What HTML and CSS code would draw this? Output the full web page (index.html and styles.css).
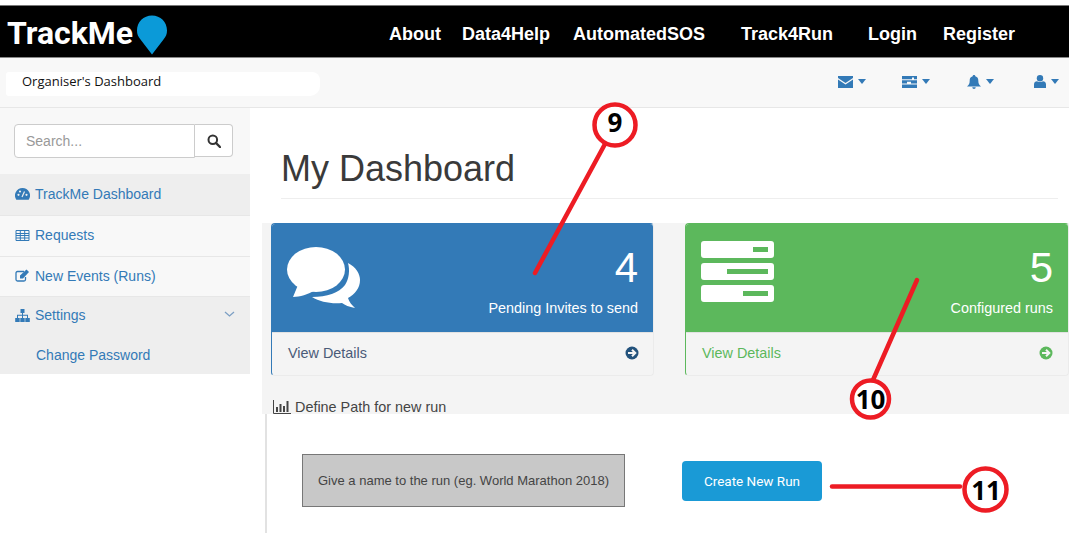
FILE: index.html
```html
<!DOCTYPE html>
<html lang="en">
<head>
    <meta charset="UTF-8">
    <meta name="viewport" content="width=device-width, initial-scale=1.0">
    <title>TrackMe - Organiser's Dashboard</title>
    <link rel="stylesheet" href="styles.css">
</head>
<body>
    <div class="topbar">
        <div class="brand">
            <span class="brand-name">TrackMe</span>
            <svg class="brand-pin" width="32" height="40" viewBox="0 0 32 40"><path d="M16 39.5 L4.5 24.5 C2 21.5 1 19 1 15.5 C1 7 7.5 .5 16 .5 C24.500 .5 31 7 31 15.500 C31 19 30 21.5 27.5 24.500 Z" fill="#0b9ad8"/></svg>
        </div>
        <nav class="mainnav">
            <a>About</a>
            <a>Data4Help</a>
            <a class="far">AutomatedSOS</a>
            <a class="far">Track4Run</a>
            <a class="near">Login</a>
            <a class="last">Register</a>
        </nav>
    </div>

    <div class="subbar">
        <div class="smudge">Organiser's Dashboard</div>
        <div class="subicons">
            <span class="subicon first">
                <svg width="15" height="12" viewBox="0 0 15 12"><path d="M0 0H15V2L7.500 7 0 2Z M0 3.500L7.500 8.500 15 3.500V12H0Z" fill="#337ab7"/></svg>
                <i class="caret"></i>
            </span>
            <span class="subicon">
                <svg width="15" height="12" viewBox="0 0 15 12"><path d="M0 0H15V3.300H12V1.500H10V3.300H0Z M0 4.300H15V7.600H9V5.800H5V7.600H0Z M0 8.600H15V12H0Z" fill="#337ab7"/></svg>
                <i class="caret"></i>
            </span>
            <span class="subicon bell">
                <svg width="14" height="14" viewBox="0 0 14 14"><path d="M7 0C8 0 8.300 .7 8.300 1.200 10.500 1.800 11.300 3.500 11.300 5.500 11.300 8.500 12 10 14 11.500H0C2 10 2.700 8.500 2.700 5.500 2.700 3.500 3.500 1.800 5.700 1.200 5.700 .7 6 0 7 0Z M5.300 12.300H8.700C8.700 13.300 8 14 7 14S5.300 13.300 5.300 12.300Z" fill="#337ab7"/></svg>
                <i class="caret"></i>
            </span>
            <span class="subicon">
                <svg width="12" height="13" viewBox="0 0 12 13"><circle cx="6" cy="3.300" r="3.200" fill="#337ab7"/><path d="M0 13V9.500C0 7.500 1.500 6.300 3 6.300 4 7.200 8 7.200 9 6.300 10.500 6.300 12 7.500 12 9.500V13Z" fill="#337ab7"/></svg>
                <i class="caret"></i>
            </span>
        </div>
    </div>

    <div class="layout">
        <aside class="sidebar">
            <div class="search">
                <div class="search-input">Search...</div>
                <div class="search-btn">
                    <svg width="14" height="14" viewBox="0 0 14 14"><circle cx="5.800" cy="5.800" r="4.300" fill="none" stroke="#333" stroke-width="2"/><path d="M9 9L13 13" stroke="#333" stroke-width="2.400" stroke-linecap="round"/></svg>
                </div>
            </div>
            <a class="side-item shaded">
                <svg class="side-icon" width="15" height="12" viewBox="0 0 15 12"><path d="M7.500 0A7.500 7.500 0 0 0 1.300 11.700H13.700A7.500 7.500 0 0 0 7.500 0Z" fill="#337ab7"/><circle cx="3.500" cy="6.800" r="1.100" fill="#eee"/><circle cx="5" cy="3.500" r="1.100" fill="#eee"/><circle cx="11.500" cy="6.800" r="1.100" fill="#eee"/><path d="M7 9L9.500 3.500" stroke="#eee" stroke-width="1.200"/></svg>
                TrackMe Dashboard
            </a>
            <a class="side-item">
                <svg class="side-icon" width="14" height="11" viewBox="0 0 14 11"><path d="M.5 .5H13.500V10.500H.5Z M.5 3.500H13.500 M.5 5.500H13.500 M.5 8H13.500 M4.800 .5V10.500 M9.200 .5V10.500" fill="none" stroke="#337ab7"/></svg>
                Requests
            </a>
            <a class="side-item short">
                <svg class="side-icon" width="15" height="13" viewBox="0 0 15 13"><path d="M9 2.500H2.500A1.500 1.500 0 0 0 1 4V10.500A1.500 1.500 0 0 0 2.500 12H9A1.500 1.500 0 0 0 10.500 10.500V8" fill="none" stroke="#337ab7" stroke-width="1.300"/><path d="M5 6.500L11.500 .5 14 3 8 9.500H5Z" fill="#337ab7"/></svg>
                New Events (Runs)
            </a>
            <div class="side-group">
                <a class="side-item plain">
                    <svg class="side-icon" width="15" height="13" viewBox="0 0 15 13"><path d="M5.500 0H9.500V4H8V5.700H13V9H14.800V13H10.300V9H12V6.700H8V9H9.700V13H5.300V9H7V6.700H3V9H4.700V13H.2V9H2V5.700H7V4H5.500Z" fill="#337ab7"/></svg>
                    Settings
                    <svg class="side-chevron" width="11" height="6" viewBox="0 0 11 6"><path d="M1 1L5.500 5 10 1" fill="none" stroke="#7c9fc4" stroke-width="1.300"/></svg>
                </a>
                <a class="side-item plain sub">Change Password</a>
            </div>
        </aside>

        <main class="content">
            <div class="page-head">
                <h1>My Dashboard</h1>
            </div>
            <section class="band">
                <div class="panels">
                    <div class="panel blue">
                        <div class="panel-top">
                            <svg class="panel-icon" width="73" height="62" viewBox="0 0 73 62"><ellipse cx="29" cy="22.500" rx="29" ry="22.500" fill="#fff"/><path d="M11 38L6 50C13 50 21 47 27 44Z" fill="#fff"/><path d="M61 16C69 20 73 27 73 33C73 41 68 47 61 51C62 55 65 58 68 61C62 60 58 58 55 56C44 57 33 55 25 50C40 50 52 46 58 38C62 32 63 23 61 16Z" fill="#fff"/></svg>
                            <div class="panel-stat">
                                <div class="stat-num">4</div>
                                <div class="stat-label">Pending Invites to send</div>
                            </div>
                        </div>
                        <div class="panel-foot">
                            <span>View Details</span>
                            <svg width="14" height="14" viewBox="0 0 14 14"><circle cx="7" cy="7" r="6.500" fill="#23527c"/><path d="M3 7H10M7 3.800L10.300 7 7 10.200" fill="none" stroke="#f4f4f4" stroke-width="2"/></svg>
                        </div>
                    </div>
                    <div class="panel green">
                        <div class="panel-top">
                            <svg class="panel-icon" width="73" height="61" viewBox="0 0 73 61"><path d="M3 0H70A3 3 0 0 1 73 3V14A3 3 0 0 1 70 17H3A3 3 0 0 1 0 14V3A3 3 0 0 1 3 0Z M52 6V11H67V6Z M3 22H70A3 3 0 0 1 73 25V36A3 3 0 0 1 70 39H3A3 3 0 0 1 0 36V25A3 3 0 0 1 3 22Z M26 28V33H67V28Z M3 44H70A3 3 0 0 1 73 47V58A3 3 0 0 1 70 61H3A3 3 0 0 1 0 58V47A3 3 0 0 1 3 44Z M42 50V55H67V50Z" fill="#fff" fill-rule="evenodd"/></svg>
                            <div class="panel-stat">
                                <div class="stat-num">5</div>
                                <div class="stat-label">Configured runs</div>
                            </div>
                        </div>
                        <div class="panel-foot">
                            <span>View Details</span>
                            <svg width="14" height="14" viewBox="0 0 14 14"><circle cx="7" cy="7" r="6.500" fill="#5cb85c"/><path d="M3 7H10M7 3.800L10.300 7 7 10.200" fill="none" stroke="#f4f4f4" stroke-width="2"/></svg>
                        </div>
                    </div>
                </div>
                <div class="define">
                    <svg width="18" height="14" viewBox="0 0 18 14"><path d="M.5 0V13.500H18" fill="none" stroke="#444"/><path d="M3 7H5V12H3Z M6.500 4H8.500V12H6.500Z M10 6H12V12H10Z M13.500 1H15.500V12H13.500Z" fill="#444"/></svg>
                    Define Path for new run
                </div>
            </section>
            <section class="newrun">
                <div class="run-name">Give a name to the run (eg. World Marathon 2018)</div>
                <button class="run-btn" type="button">Create New Run</button>
            </section>
        </main>
    </div>

    <!-- numbered callouts drawn on top of the screenshot -->
    <svg class="callouts" width="1069" height="533" viewBox="0 0 1069 533">
        <g fill="none" stroke="#ed1c24" stroke-width="4.500" stroke-linecap="round">
            <path d="M605 144L535 273"/>
            <path d="M873 380L917 280"/>
            <path d="M832 486.500H960"/>
            <circle cx="615" cy="125" r="20.500" fill="#fff"/>
            <circle cx="870.500" cy="399" r="18.500" fill="#fff"/>
            <circle cx="985.500" cy="489.500" r="21" fill="#fff"/>
        </g>
        <g class="callout-num" text-anchor="middle">
            <text x="615" y="132">9</text>
            <text x="870.500" y="409">10</text>
            <text x="986" y="500">11</text>
        </g>
    </svg>
</body>
</html>
```

FILE: styles.css
```css
* {
    box-sizing: border-box;
}

body {
    margin: 0;
    padding-top: 5px;
    height: 533px;
    overflow: hidden;
    position: relative;
    background: #fff;
    font-family: "Liberation Sans", sans-serif;
}

.topbar {
    height: 53px;
    background: #000;
    border-top: 1px solid #777;
    border-bottom: 1px solid #888;
    display: flex;
    align-items: center;
}

.brand {
    display: flex;
    align-items: center;
    width: 389px;
    padding-left: 7px;
}

.brand-name {
    color: #fff;
    font-family: Roboto, sans-serif;
    font-size: 32px;
    font-weight: 700;
    margin-top: 2px;
}

.brand-pin {
    margin-left: 3px;
    margin-top: 6px;
}

.mainnav {
    display: flex;
    gap: 21px;
    padding-top: 6px;
    color: #fff;
    font-size: 18px;
    font-weight: 700;
}

.mainnav .far {
    margin-left: 2px;
}

.mainnav .far + .far {
    margin-left: 15px;
}

.mainnav .near {
    margin-left: 14px;
}

.mainnav .last {
    margin-left: 5px;
}

.subbar {
    height: 50px;
    background: #f8f8f8;
    border-bottom: 1px solid #e7e7e7;
    display: flex;
    align-items: center;
    justify-content: space-between;
    padding: 0 10px 0 6px;
}

.smudge {
    width: 314px;
    height: 24px;
    background: #fff;
    border-radius: 3px 8px 10px 3px;
    padding: 0 0 0 16px;
    margin-top: 3px;
    color: #111;
    font-family: "Open Sans", sans-serif;
    font-size: 13px;
    line-height: 18px;
}

.subicons {
    display: flex;
    align-items: center;
    gap: 37px;
    margin-top: -2px;
}

.subicon {
    display: flex;
    align-items: center;
    gap: 5px;
}

.subicon.first {
    margin-right: -1px;
}

.subicon.bell {
    margin-right: 3px;
}

.caret {
    width: 0;
    height: 0;
    border-left: 4.5px solid transparent;
    border-right: 4.5px solid transparent;
    border-top: 5px solid #337ab7;
}

.layout {
    display: flex;
    height: 425px;
}

.sidebar {
    width: 250px;
    height: 266px;
    flex: none;
    background: #f8f8f8;
    color: #337ab7;
    font-size: 14px;
}

.search {
    display: flex;
    height: 66px;
    padding: 16px 17px 0 14px;
}

.search-input {
    width: 182px;
    height: 34px;
    background: #fff;
    border: 1px solid #ccc;
    border-radius: 4px 0 0 4px;
    color: #999;
    font-size: 14px;
    line-height: 32px;
    padding-left: 11px;
}

.search-btn {
    width: 38px;
    height: 33px;
    background: #fff;
    border: 1px solid #ccc;
    border-left: none;
    border-radius: 0 4px 4px 0;
    display: flex;
    align-items: center;
    justify-content: center;
}

.side-item {
    display: flex;
    align-items: center;
    height: 41px;
    padding: 0 15px 2px 15px;
    border-bottom: 1px solid #e7e7e7;
}

.side-item.shaded {
    height: 42px;
    background: #eee;
}

.side-item.short {
    height: 40px;
}

.side-item.plain {
    height: 38px;
    border-bottom: none;
}

.side-item.sub {
    height: 39px;
    padding: 0 15px 0 36px;
}

.side-group {
    background: #eee;
}

.side-icon {
    width: 15px;
    margin-right: 5px;
}

.side-chevron {
    margin-left: auto;
    margin-top: -3px;
}

.content {
    flex: 1;
    min-width: 0;
}

.page-head {
    height: 115px;
    padding: 0 11px 0 31px;
}

h1 {
    margin: 0;
    height: 91px;
    padding-top: 40px;
    border-bottom: 1px solid #eee;
    color: #3a3a3a;
    font-size: 36px;
    font-weight: 400;
    line-height: 42px;
}

.band {
    margin-left: 12px;
    height: 191px;
    background: #f4f4f4;
    padding-left: 9px;
    overflow: hidden;
}

.panels {
    display: flex;
    gap: 31px;
}

.panel {
    width: 384px;
    height: 153px;
    border: 1px solid;
    border-radius: 4px;
    overflow: hidden;
    background: #f4f4f4;
}

.panel.blue {
    width: 383px;
    border-color: #337ab7 #ebebeb #ebebeb #337ab7;
}

.panel.green {
    border-color: #5cb85c #ebebeb #ebebeb #5cb85c;
    color: #5cb85c;
}

.panel-top {
    height: 108px;
    padding: 18px 15px 0 15px;
    display: flex;
    justify-content: space-between;
    color: #fff;
}

.blue .panel-top {
    background: #337ab7;
}

.green .panel-top {
    background: #5cb85c;
}

.panel-icon {
    margin-top: 5px;
}

.green .panel-icon {
    margin-top: -1px;
}

.panel-stat {
    text-align: right;
}

.stat-num {
    font-size: 42px;
    line-height: 52px;
}

.stat-label {
    font-size: 14.4px;
    line-height: 20px;
    margin-top: 4px;
}

.panel-foot {
    height: 43px;
    padding: 0 15px 2px 16px;
    border-top: 1px solid #e2e2e2;
    display: flex;
    align-items: center;
    justify-content: space-between;
    font-size: 14.4px;
    color: #4a5b78;
}

.blue .panel-foot {
    padding-right: 14px;
}

.green .panel-foot {
    color: #5cb85c;
}

.define {
    display: flex;
    align-items: center;
    gap: 4px;
    height: 14px;
    margin-top: 24px;
    padding-left: 2px;
    color: #444;
    font-size: 14.4px;
    line-height: 14px;
}

.newrun {
    margin-left: 15px;
    height: 119px;
    border-left: 2px solid #e2e2e2;
    display: flex;
    align-items: flex-start;
    padding: 40px 0 0 35px;
}

.run-name {
    width: 323px;
    height: 53px;
    background: #c8c8c8;
    border: 1px solid #777;
    color: #444;
    font-size: 13px;
    line-height: 51px;
    text-align: center;
}

.run-btn {
    width: 140px;
    height: 40px;
    margin: 7px 0 0 57px;
    background: #1a9ad6;
    border: none;
    border-radius: 4px;
    color: #fff;
    font-family: Roboto, sans-serif;
    font-size: 13.5px;
}

.callouts {
    position: absolute;
    top: 0;
    left: 0;
    pointer-events: none;
}

.callout-num {
    fill: #000;
    font-family: "Open Sans", sans-serif;
    font-size: 26px;
    font-weight: 700;
}
```
